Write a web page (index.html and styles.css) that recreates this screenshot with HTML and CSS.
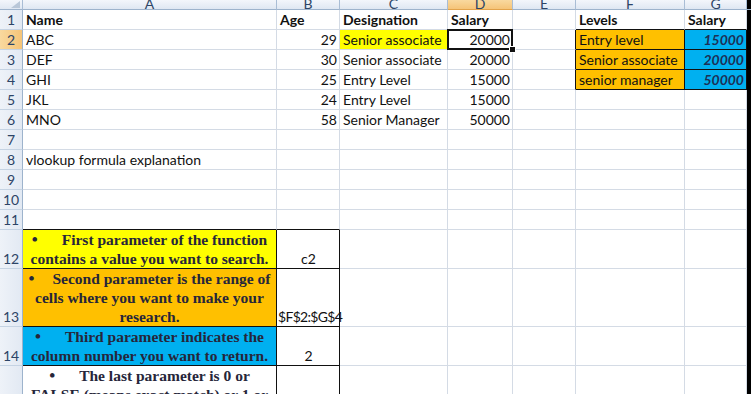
FILE: index.html
```html
<!DOCTYPE html>
<html lang="en">
<head>
    <meta charset="UTF-8">
    <title>vlookup</title>
    <link rel="stylesheet" href="styles.css">
</head>
<body>
    <div class="sheet">
        <!-- column headers -->
        <div class="row head-row">
            <div class="corner"><span class="tri"></span></div>
            <div class="ch"><span>A</span></div>
            <div class="ch"><span>B</span></div>
            <div class="ch"><span>C</span></div>
            <div class="ch sel"><span>D</span></div>
            <div class="ch"><span>E</span></div>
            <div class="ch"><span>F</span></div>
            <div class="ch"><span>G</span></div>
            <div class="ch edge"></div>
        </div>

        <div class="row">
            <div class="rh">1</div>
            <div class="c b">Name</div>
            <div class="c b">Age</div>
            <div class="c b">Designation</div>
            <div class="c b">Salary</div>
            <div class="c"></div>
            <div class="c b bb">Levels</div>
            <div class="c b bb">Salary</div>
            <div class="edge"></div>
        </div>
        <div class="row">
            <div class="rh sel">2</div>
            <div class="c">ABC</div>
            <div class="c r">29</div>
            <div class="c yellow">Senior associate</div>
            <div class="c r active">20000</div>
            <div class="c br"></div>
            <div class="c orange bb br">Entry level</div>
            <div class="c blue num bb br">15000</div>
            <div class="edge"></div>
        </div>
        <div class="row">
            <div class="rh">3</div>
            <div class="c">DEF</div>
            <div class="c r">30</div>
            <div class="c">Senior associate</div>
            <div class="c r">20000</div>
            <div class="c br"></div>
            <div class="c orange bb br">Senior associate</div>
            <div class="c blue num bb br">20000</div>
            <div class="edge"></div>
        </div>
        <div class="row">
            <div class="rh">4</div>
            <div class="c">GHI</div>
            <div class="c r">25</div>
            <div class="c">Entry Level</div>
            <div class="c r">15000</div>
            <div class="c br"></div>
            <div class="c orange bb br">senior manager</div>
            <div class="c blue num bb br">50000</div>
            <div class="edge"></div>
        </div>
        <div class="row">
            <div class="rh">5</div>
            <div class="c">JKL</div>
            <div class="c r">24</div>
            <div class="c">Entry Level</div>
            <div class="c r">15000</div>
            <div class="c"></div><div class="c"></div><div class="c"></div>
            <div class="edge"></div>
        </div>
        <div class="row">
            <div class="rh">6</div>
            <div class="c">MNO</div>
            <div class="c r">58</div>
            <div class="c">Senior Manager</div>
            <div class="c r">50000</div>
            <div class="c"></div><div class="c"></div><div class="c"></div>
            <div class="edge"></div>
        </div>
        <div class="row">
            <div class="rh">7</div>
            <div class="c"></div><div class="c"></div><div class="c"></div><div class="c"></div>
            <div class="c"></div><div class="c"></div><div class="c"></div>
            <div class="edge"></div>
        </div>
        <div class="row">
            <div class="rh">8</div>
            <div class="c">vlookup formula explanation</div>
            <div class="c"></div><div class="c"></div><div class="c"></div>
            <div class="c"></div><div class="c"></div><div class="c"></div>
            <div class="edge"></div>
        </div>
        <div class="row">
            <div class="rh">9</div>
            <div class="c"></div><div class="c"></div><div class="c"></div><div class="c"></div>
            <div class="c"></div><div class="c"></div><div class="c"></div>
            <div class="edge"></div>
        </div>
        <div class="row">
            <div class="rh">10</div>
            <div class="c"></div><div class="c"></div><div class="c"></div><div class="c"></div>
            <div class="c"></div><div class="c"></div><div class="c"></div>
            <div class="edge"></div>
        </div>
        <div class="row">
            <div class="rh">11</div>
            <div class="c bb"></div><div class="c bb"></div><div class="c"></div><div class="c"></div>
            <div class="c"></div><div class="c"></div><div class="c"></div>
            <div class="edge"></div>
        </div>

        <div class="row tall">
            <div class="rh">12</div>
            <div class="c note yellow bb br"><p><span class="dot">•</span>First parameter of the function<br>contains a value you want to search.</p></div>
            <div class="c mid bb br">c2</div>
            <div class="c"></div><div class="c"></div><div class="c"></div><div class="c"></div><div class="c"></div>
            <div class="edge"></div>
        </div>
        <div class="row taller">
            <div class="rh">13</div>
            <div class="c note orange bb br"><p><span class="dot first">•</span>Second parameter is the range of<br>cells where you want to make your<br>research.</p></div>
            <div class="c over bb br">$F$2:$G$4</div>
            <div class="c"></div><div class="c"></div><div class="c"></div><div class="c"></div><div class="c"></div>
            <div class="edge"></div>
        </div>
        <div class="row tall">
            <div class="rh">14</div>
            <div class="c note blue bb br"><p><span class="dot">•</span>Third parameter indicates the<br>column number you want to return.</p></div>
            <div class="c mid bb br">2</div>
            <div class="c"></div><div class="c"></div><div class="c"></div><div class="c"></div><div class="c"></div>
            <div class="edge"></div>
        </div>
        <div class="row taller">
            <div class="rh">15</div>
            <div class="c note top bb br"><p><span class="dot">•</span>The last parameter is 0 or<br>FALSE (means exact match) or 1 or<br>TRUE (approximate match).</p></div>
            <div class="c bb br"></div>
            <div class="c"></div><div class="c"></div><div class="c"></div><div class="c"></div><div class="c"></div>
            <div class="edge"></div>
        </div>
    </div>
</body>
</html>
```

FILE: styles.css
```css
body {
    margin: 0;
    background: #fff;
    overflow: hidden;
    font-family: Lato, "Open Sans", sans-serif;
    font-size: 14px;
    color: #111;
}
.sheet {
    width: 751px;
}
.row {
    display: grid;
    grid-template-columns: 23px 254px 63px 108px 65px 63px 109px 62px 4px;
    height: 20px;
}
.row.tall {
    height: 39px;
}
.row.taller {
    height: 58px;
}

/* headers */
.head-row {
    height: 10px;
}
.corner, .ch {
    background: linear-gradient(#f3f6fb, #dfe7f2);
    border-right: 1px solid #a9bdd5;
    border-bottom: 1px solid #9db3cc;
    overflow: hidden;
    position: relative;
}
.ch {
    display: flex;
    justify-content: center;
    align-items: flex-end;
    color: #2d4466;
}
.ch span {
    line-height: 14px;
    margin-bottom: -2px;
}
.ch.sel {
    background: linear-gradient(#f9d99f, #f5c478);
    border-bottom-color: #e2a34b;
}
.ch.edge {
    border-right: none;
}
.tri {
    position: absolute;
    right: 2px;
    bottom: 1px;
    width: 0;
    height: 0;
    border-left: 9px solid transparent;
    border-bottom: 7px solid #b9c7d8;
}
.rh {
    background: linear-gradient(90deg, #eef2f8, #e2e9f3);
    border-right: 1px solid #9db3cc;
    border-bottom: 1px solid #c5d3e3;
    color: #2d4466;
    display: flex;
    align-items: flex-end;
    justify-content: center;
    padding-bottom: 1px;
    line-height: 17px;
}
.rh.sel {
    background: linear-gradient(90deg, #f9d99f, #f5c478);
}

/* cells */
.c {
    border-right: 1px solid #d4dbe5;
    border-bottom: 1px solid #d4dbe5;
    padding: 0 2px 1px 3px;
    display: flex;
    align-items: flex-end;
    line-height: 17px;
    white-space: nowrap;
    min-width: 0;
}
.c.b {
    font-weight: bold;
}
.c.r {
    justify-content: flex-end;
}
.c.mid {
    justify-content: center;
}
.c.over {
    padding-left: 1px;
    overflow: visible;
    letter-spacing: -0.7px;
}
.c.bb {
    border-bottom-color: #111;
}
.c.br {
    border-right-color: #111;
}
.edge {
    background: #000;
}
.yellow {
    background: #ffff00;
}
.orange {
    background: #ffc000;
}
.blue {
    background: #00b0f0;
}
.c.num {
    justify-content: flex-end;
    font-weight: bold;
    font-style: italic;
    color: #1d2f55;
}
.c.active {
    position: relative;
}
.c.active::after {
    content: "";
    position: absolute;
    left: -1px;
    top: -1px;
    right: -1px;
    bottom: -1px;
    border: 2px solid #111;
}
.c.active::before {
    content: "";
    position: absolute;
    right: -4px;
    bottom: -4px;
    width: 5px;
    height: 5px;
    background: #111;
    border: 1px solid #fff;
    z-index: 1;
}

/* notes in A12:A15 */
.c.note {
    justify-content: center;
    white-space: normal;
    padding: 0 2px 0 2px;
}
.c.note.top {
    align-items: flex-start;
}
.note p {
    margin: 0;
    font-family: "Liberation Serif", "Times New Roman", serif;
    font-weight: bold;
    font-size: 15.5px;
    line-height: 19px;
    text-align: center;
    color: #26263a;
}
.dot {
    margin-right: 24px;
    font-size: 17px;
}
.dot.first {
    margin-right: 18px;
}
```
